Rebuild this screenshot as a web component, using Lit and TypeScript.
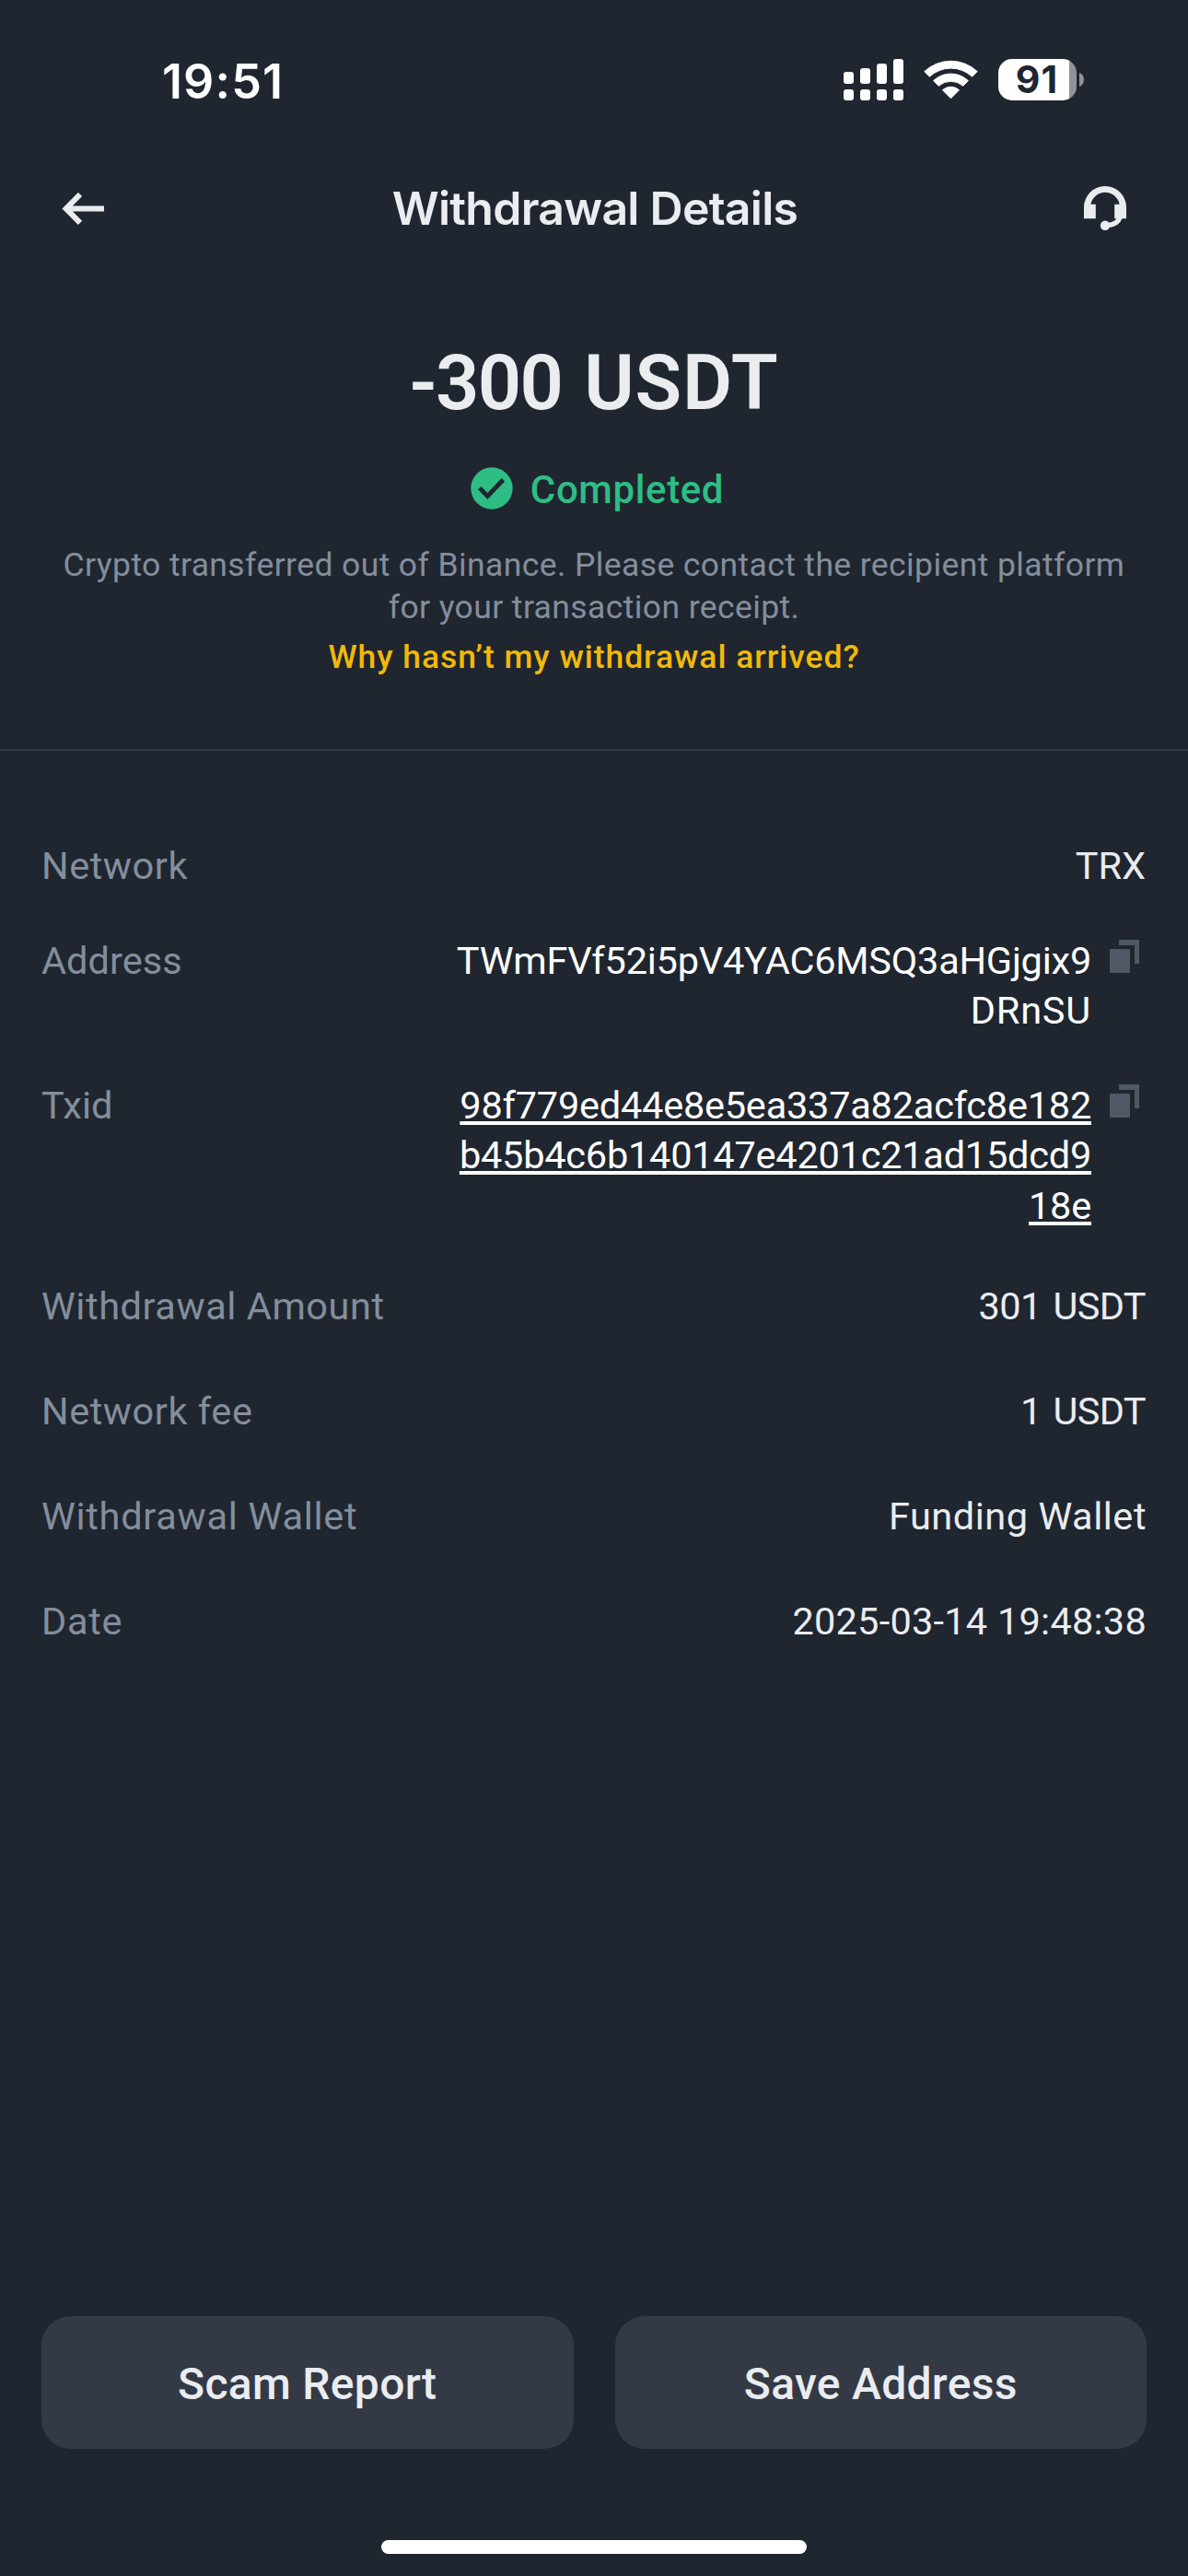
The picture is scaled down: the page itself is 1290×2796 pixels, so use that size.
import { LitElement, html, css, nothing } from "lit";
import { customElement, property } from "lit/decorators.js";

interface Detail {
  label: string;
  fit: string;
  lines: string[];
  tone: string;
  copy?: boolean;
}

const details: Detail[] = [
  { label: "Network", fit: "", lines: ["TRX"], tone: "plain" },
  {
    label: "Address",
    fit: "snug",
    lines: ["TWmFVf52i5pV4YAC6MSQ3aHGjgix9", "DRnSU"],
    tone: "bright address",
    copy: true,
  },
  {
    label: "Txid",
    fit: "snug",
    lines: ["98f779ed44e8e5ea337a82acfc8e182", "b45b4c6b140147e4201c21ad15dcd9", "18e"],
    tone: "bright link",
    copy: true,
  },
  { label: "Withdrawal Amount", fit: "", lines: ["301 USDT"], tone: "amount" },
  { label: "Network fee", fit: "", lines: ["1 USDT"], tone: "amount" },
  { label: "Withdrawal Wallet", fit: "loose", lines: ["Funding Wallet"], tone: "wide" },
  { label: "Date", fit: "loose", lines: ["2025-03-14 19:48:38"], tone: "date" },
];

const copyIcon = html`<svg class="copy" width="32" height="36" viewBox="0 0 32 36" fill="#4f5867">
  <path d="M10 0h22v26h-5V6H10z" />
  <path d="M0 10h22v26H0z" />
</svg>`;

@customElement("status-bar")
export class StatusBar extends LitElement {
  static styles = css`
    :host {
      display: flex;
      justify-content: space-between;
      height: 174px;
      box-sizing: border-box;
      padding: 0 113px 0 176px;
      color: #fff;
      font-family: "Inter", sans-serif;
    }
    .time {
      margin-top: 62px;
      font-size: 52px;
      line-height: 54px;
      font-weight: 600;
      letter-spacing: 1.1px;
    }
    .right {
      display: flex;
      align-items: flex-start;
      padding-top: 64px;
    }
    .wifi {
      margin: 1px 22px 0 22px;
    }
    .battery {
      display: flex;
      align-items: center;
      gap: 3px;
    }
    .cell {
      display: flex;
      align-items: center;
      justify-content: center;
      width: 85px;
      height: 45px;
      border-radius: 15px;
      box-sizing: border-box;
      padding-right: 1px;
      background: linear-gradient(90deg, #fff 77px, #8f9297 77px);
      color: #1f2630;
      font-size: 41px;
      line-height: 45px;
      font-weight: 700;
      letter-spacing: 1px;
    }
  `;

  render() {
    return html`
      <div class="time">19:51</div>
      <div class="right">
        <svg width="65" height="45" viewBox="0 0 65 45" fill="#fff">
          <rect x="0" y="14" width="11" height="13" rx="3" />
          <rect x="18" y="10" width="11" height="17" rx="3" />
          <rect x="36" y="5" width="11" height="22" rx="3" />
          <rect x="54" y="0" width="11" height="27" rx="3" />
          <rect x="0" y="33" width="11" height="12" rx="3" />
          <rect x="18" y="33" width="11" height="12" rx="3" />
          <rect x="36" y="33" width="11" height="12" rx="3" />
          <rect x="54" y="33" width="11" height="12" rx="3" />
        </svg>
        <svg class="wifi" width="59" height="43" viewBox="0 0 59 43" fill="#fff" stroke="#fff" stroke-width="1" stroke-linejoin="round">
          <path d="M0.8 12.6A42 42 0 0 1 58.2 12.6L52.6 18.2A33.8 33.8 0 0 0 6.4 18.2z" />
          <path d="M10.6 22.6A27.4 27.4 0 0 1 48.4 22.6L42.7 28.3A19.8 19.8 0 0 0 16.3 28.3z" />
          <path d="M20.5 32.8A13.2 13.2 0 0 1 38.5 32.8L29.5 41.8z" />
        </svg>
        <div class="battery">
          <div class="cell">91</div>
          <svg width="5" height="15" viewBox="0 0 5 15" fill="#8f9297">
            <path d="M0 0C3 1 5 4 5 7.500S3 14 0 15z" />
          </svg>
        </div>
      </div>
    `;
  }
}

@customElement("detail-row")
export class DetailRow extends LitElement {
  @property({ attribute: false }) item!: Detail;

  static styles = css`
    :host {
      display: flex;
      align-items: flex-start;
      justify-content: space-between;
      font-size: 41.5px;
      line-height: 54.6px;
    }
    .label {
      color: #848e9c;
      letter-spacing: 0.55px;
    }
    .snug {
      letter-spacing: 0.05px;
    }
    .loose {
      letter-spacing: 0.71px;
    }
    .side {
      display: flex;
      align-items: flex-start;
    }
    .value {
      text-align: right;
      color: #eaecef;
    }
    .plain,
    .amount {
      padding-right: 1px;
    }
    .line {
      display: block;
    }
    .amount {
      letter-spacing: -0.6px;
      word-spacing: 3px;
    }
    .wide {
      letter-spacing: 0.52px;
    }
    .date {
      letter-spacing: 0.25px;
    }
    .bright {
      color: #fff;
      letter-spacing: -0.23px;
    }
    .address .line:last-child {
      letter-spacing: 0.8px;
    }
    .link .text {
      text-decoration: underline;
      text-decoration-thickness: 3.5px;
      text-underline-offset: 3px;
      text-decoration-skip-ink: none;
    }
    .copy {
      margin: 4px 8px 0 20px;
    }
  `;

  render() {
    const { label, fit, lines, tone, copy } = this.item;
    return html`
      <div class="label ${fit}">${label}</div>
      <div class="side">
        <div class="value ${tone}">
          ${lines.map((line) => html`<span class="line"><span class="text">${line}</span></span>`)}
        </div>
        ${copy ? copyIcon : nothing}
      </div>
    `;
  }
}

@customElement("app-root")
export class AppRoot extends LitElement {
  static styles = css`
    :host {
      display: flex;
      flex-direction: column;
      height: 2796px;
      background: #1f2630;
      color: #eaecef;
      font-family: "Roboto", "Liberation Sans", sans-serif;
    }
    .nav {
      display: flex;
      align-items: center;
      justify-content: space-between;
      height: 104px;
      padding: 0 67px;
    }
    .title {
      font: 600 50px/104px "Inter", sans-serif;
      letter-spacing: -0.75px;
      padding-left: 2px;
    }
    .summary {
      display: flex;
      flex-direction: column;
      align-items: center;
      box-sizing: border-box;
      height: 537px;
      padding-top: 88px;
      border-bottom: 2px solid #333b47;
    }
    .amount {
      font-size: 83px;
      line-height: 100px;
      font-weight: 600;
      letter-spacing: -1.7px;
      word-spacing: 5px;
    }
    .unit {
      letter-spacing: 0.9px;
    }
    .status {
      display: flex;
      align-items: center;
      gap: 19px;
      margin-top: 34px;
      padding-left: 7px;
      height: 60px;
      color: #2ebd85;
      font-size: 42px;
      font-weight: 500;
      letter-spacing: 0.61px;
    }
    .status .word {
      padding-top: 3px;
    }
    .note {
      margin-top: 30px;
      font-size: 35.5px;
      line-height: 46px;
      letter-spacing: 0.4px;
      color: #848e9c;
      text-align: center;
      width: 1180px;
    }
    .help {
      margin-top: 8px;
      font-size: 35.5px;
      line-height: 46px;
      font-weight: 500;
      letter-spacing: 0.94px;
      color: #f0b90b;
    }
    .details {
      display: flex;
      flex-direction: column;
      padding: 98px 45px 0;
    }
    .details > :nth-child(n + 2) {
      margin-top: 48px;
    }
    .details > :nth-child(4) {
      margin-top: 54px;
    }
    .details > :nth-child(n + 5) {
      margin-top: 59.4px;
    }
    .actions {
      display: grid;
      grid-template-columns: 1fr 1fr;
      gap: 45px;
      margin-top: auto;
      padding: 0 45px;
    }
    .button {
      height: 144px;
      border: 0;
      border-radius: 32px;
      background: #333945;
      color: #eaecef;
      font: 500 48px/144px "Roboto", sans-serif;
      letter-spacing: 0.3px;
      padding: 2px 0 0;
    }
    .home {
      align-self: center;
      width: 462px;
      height: 15px;
      margin: 99px 0 24px;
      border-radius: 8px;
      background: #fff;
    }
  `;

  render() {
    return html`
      <status-bar></status-bar>
      <div class="nav">
        <svg width="46" height="35" viewBox="0 0 46 35" fill="none" stroke="#eaecef" stroke-width="6">
          <path d="M20 2L4.700 17.400L20 32.800M4.700 17.400H46" />
        </svg>
        <div class="title">Withdrawal Details</div>
        <svg width="46" height="48" viewBox="0 0 46 48" fill="#eaecef">
          <path d="M0 35.300V23a23 23 0 0 1 46 0V35.300H33.200V19.700H38.600a15.900 15.900 0 0 0-31.200 0H12.800V35.300z" />
          <path d="M38.800 34.500C37.500 38.500 32.500 42 25 42.700" fill="none" stroke="#eaecef" stroke-width="5.600" />
          <circle cx="23" cy="42.700" r="5.200" />
        </svg>
      </div>
      <section class="summary">
        <div class="amount">-300 <span class="unit">USDT</span></div>
        <div class="status">
          <svg width="46" height="46" viewBox="0 0 46 46" fill="none">
            <circle cx="23" cy="23" r="22.700" fill="#2ebd85" />
            <path d="M9.700 22.600L18.400 31.400L35.400 13.800" stroke="#1f2630" stroke-width="4.900" />
          </svg>
          <span class="word">Completed</span>
        </div>
        <div class="note">
          Crypto transferred out of Binance. Please contact the recipient platform for your transaction receipt.
        </div>
        <div class="help">Why hasn’t my withdrawal arrived?</div>
      </section>
      <section class="details">
        ${details.map((item) => html`<detail-row .item=${item}></detail-row>`)}
      </section>
      <div class="actions">
        <button class="button">Scam Report</button>
        <button class="button">Save Address</button>
      </div>
      <div class="home"></div>
    `;
  }
}
